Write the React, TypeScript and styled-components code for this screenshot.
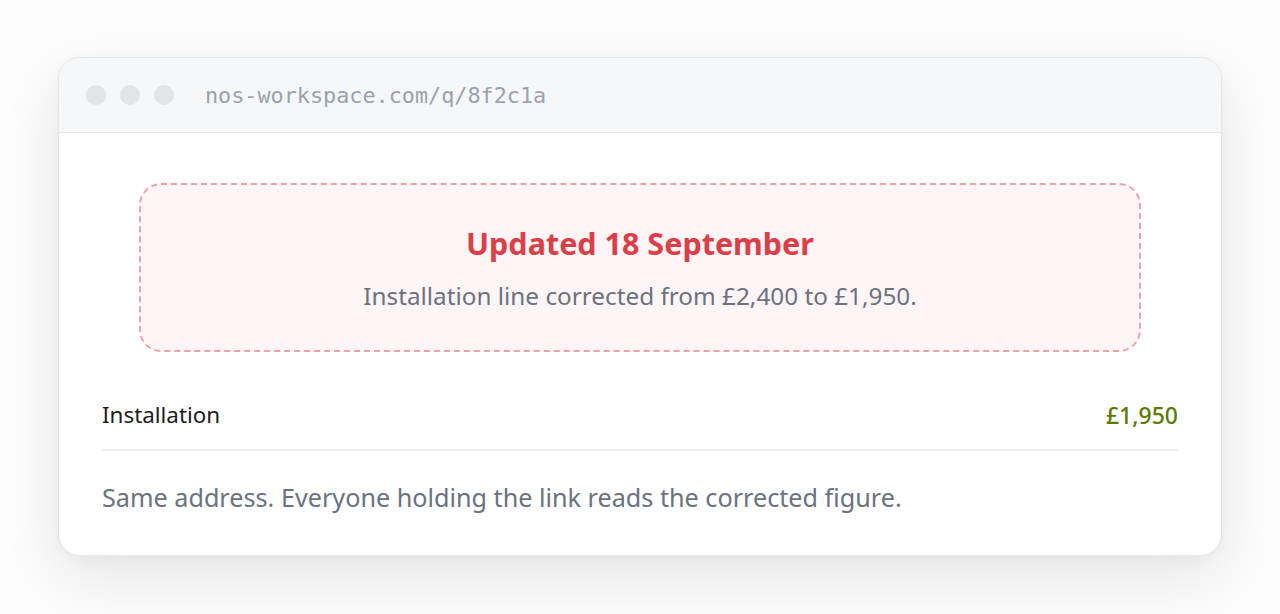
import React from "react";
import styled, { createGlobalStyle } from "styled-components";

const Global = createGlobalStyle`
  html, body { margin: 0; padding: 0; background: #fcfcfc; }
  body { font-family: "Noto Sans", "Open Sans", sans-serif; }
`;

const Page = styled.div`
  box-sizing: border-box;
  width: 1280px;
  height: 614px;
  padding: 57px 58px 0 58px;
  background: #fcfcfc;
`;

const Window = styled.div`
  box-sizing: border-box;
  width: 1164px;
  height: 499px;
  background: #ffffff;
  border: 1px solid #e4e6ea;
  border-radius: 22px;
  overflow: hidden;
  box-shadow: 0 22px 60px rgba(0, 0, 0, 0.09), 0 4px 14px rgba(0, 0, 0, 0.03);
  display: flex;
  flex-direction: column;
`;

const TitleBar = styled.div`
  box-sizing: border-box;
  height: 75px;
  background: #f6f7f9;
  border-bottom: 1px solid #e4e6ea;
  display: flex;
  align-items: center;
  padding-left: 27px;
`;

const Dots = styled.div`
  display: flex;
  gap: 14px;
  margin-right: 31px;
`;

const Dot = styled.span`
  width: 20px;
  height: 20px;
  border-radius: 50%;
  background: #e2e4e8;
`;

const Url = styled.span`
  font-family: "DejaVu Sans Mono", "Liberation Mono", monospace;
  font-size: 21.8px;
  color: #9ca2ad;
  margin-top: 1px;
`;

const Body = styled.div`
  padding: 50px 43px 0 43px;
  display: flex;
  flex-direction: column;
`;

const Callout = styled.div`
  box-sizing: border-box;
  margin: 0 37px;
  height: 169px;
  border: 2px dashed #eaa3ab;
  border-radius: 22px;
  background: #fff5f6;
  display: flex;
  flex-direction: column;
  align-items: center;
  justify-content: center;
  gap: 20px;
`;

const CalloutTitle = styled.div`
  font-size: 30.5px;
  font-weight: 700;
  color: #dc3e48;
  line-height: 36px;
`;

const CalloutText = styled.div`
  font-size: 24.3px;
  color: #6b7280;
  line-height: 30px;
`;

const Row = styled.div`
  display: flex;
  justify-content: space-between;
  align-items: center;
  margin-top: 48px;
  padding-bottom: 19px;
  border-bottom: 2px solid #eeeff1;
`;

const Label = styled.span`
  font-size: 22.4px;
  color: #1c1c1c;
  line-height: 30px;
`;

const Price = styled.span`
  font-size: 23px;
  font-weight: 500;
  color: #5b7a06;
  line-height: 30px;
`;

const Note = styled.p`
  margin: 31px 0 0 0;
  font-size: 25.2px;
  color: #6b7280;
  line-height: 30px;
`;

export default function App() {
  return (
    <>
      <Global />
      <Page>
        <Window>
          <TitleBar>
            <Dots>
              <Dot />
              <Dot />
              <Dot />
            </Dots>
            <Url>nos-workspace.com/q/8f2c1a</Url>
          </TitleBar>
          <Body>
            <Callout>
              <CalloutTitle>Updated 18 September</CalloutTitle>
              <CalloutText>Installation line corrected from £2,400 to £1,950.</CalloutText>
            </Callout>
            <Row>
              <Label>Installation</Label>
              <Price>£1,950</Price>
            </Row>
            <Note>Same address. Everyone holding the link reads the corrected figure.</Note>
          </Body>
        </Window>
      </Page>
    </>
  );
}
